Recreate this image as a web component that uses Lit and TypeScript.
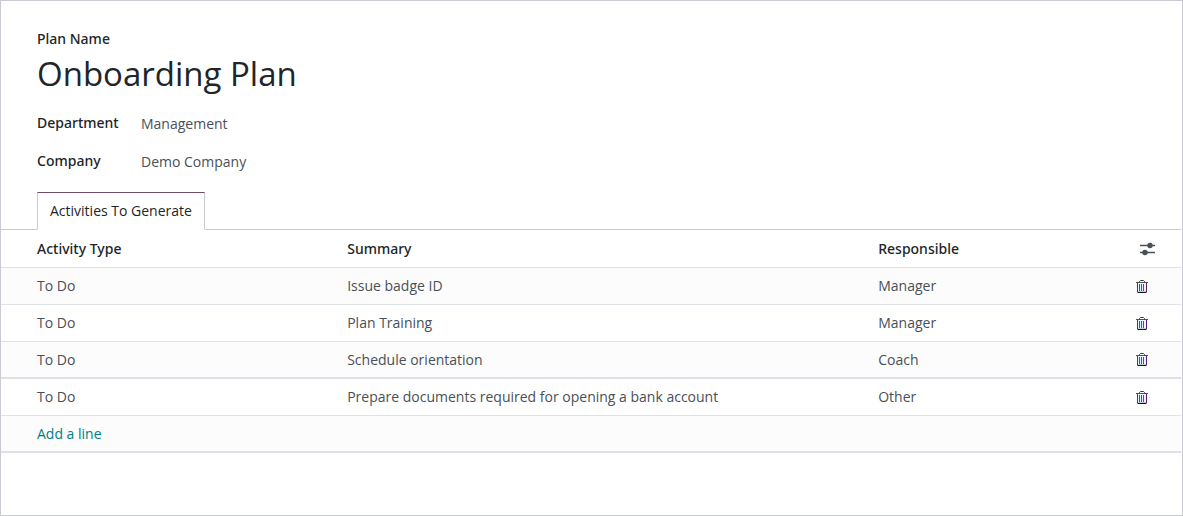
import { LitElement, html, css, svg } from "lit";
import { customElement, property, state } from "lit/decorators.js";

interface Activity {
  type: string;
  summary: string;
  responsible: string;
}

const slidersIcon = svg`<svg width="16" height="14" viewBox="0 0 16 14" aria-hidden="true">
  <path d="M0 3.5h15M0 10.5h15" stroke="#495057" stroke-width="1.3"/>
  <circle cx="10" cy="3.5" r="2.7" fill="#495057"/>
  <circle cx="5" cy="10.5" r="2.7" fill="#495057"/>
</svg>`;

const trashIcon = svg`<svg width="12" height="13" viewBox="0 0 12 13" aria-hidden="true">
  <path d="M1 3h10v9H1z" fill="#e6f5ff"/>
  <path d="M0 2.5h12" stroke="#55534f" stroke-width="1"/>
  <path d="M3.5 2.5V1.5L4.5 0.5h3l1 1v1" fill="none" stroke="#343a40" stroke-width="1"/>
  <path d="M1.5 3v9" stroke="#4c4535" stroke-width="1"/>
  <path d="M10.5 3v9" stroke="#5a1a78" stroke-width="1"/>
  <path d="M1.5 12.4h9" stroke="#15151c" stroke-width="1.2"/>
  <path d="M3.5 4v7M5.5 4v7M7.5 4v7" stroke="#1767a8" stroke-width="1"/>
</svg>`;

@customElement("plan-field")
export class PlanField extends LitElement {
  @property() label = "";
  @property() value = "";
  @property({ type: Boolean, reflect: true }) large = false;

  static styles = css`
    :host {
      display: grid;
      grid-template-columns: 104px 1fr;
      align-items: center;
      height: 38px;
    }
    :host([large]) {
      display: block;
      height: auto;
    }
    .label {
      display: block;
      font-family: "Noto Sans", sans-serif;
      font-weight: 500;
      line-height: 20px;
      color: #212529;
    }
    .value {
      display: block;
      box-sizing: border-box;
      width: 100%;
      border: 0;
      padding: 2px 0 0;
      background: transparent;
      font: inherit;
      line-height: 20px;
      color: #495057;
      outline: none;
    }
    :host([large]) .value {
      font-size: 33px;
      line-height: 46px;
      height: 50px;
      padding: 0 0 2px;
      color: #212529;
    }
  `;

  render() {
    return html`
      <label class="label" for="field">${this.label}</label>
      <input class="value" id="field" type="text" .value=${this.value} />
    `;
  }
}

@customElement("activity-table")
export class ActivityTable extends LitElement {
  @state() private rows: Activity[] = [
    { type: "To Do", summary: "Issue badge ID", responsible: "Manager" },
    { type: "To Do", summary: "Plan Training", responsible: "Manager" },
    { type: "To Do", summary: "Schedule orientation", responsible: "Coach" },
    {
      type: "To Do",
      summary: "Prepare documents required for opening a bank account",
      responsible: "Other",
    },
  ];

  static styles = css`
    :host {
      display: block;
    }
    .table {
      width: 100%;
      table-layout: fixed;
      border-collapse: separate;
      border-spacing: 0;
    }
    .type {
      width: 29%;
    }
    .summary {
      width: 45%;
    }
    .actions {
      width: 49px;
    }
    th,
    td {
      box-sizing: border-box;
      height: 37px;
      padding: 0 4px;
      border-bottom: 1px solid #dee2e6;
      text-align: left;
      vertical-align: middle;
      line-height: 20px;
      color: #495057;
    }
    th {
      height: 38px;
      font-family: "Noto Sans", sans-serif;
      font-weight: 500;
      color: #212529;
    }
    th:first-child,
    td:first-child {
      padding-left: 36px;
    }
    tbody tr:nth-child(odd) {
      background: #fcfcfc;
    }
    .ruled td {
      border-bottom: 2px solid #dfe0e7;
    }
    .icon {
      display: flex;
      padding: 0;
      border: 0;
      background: none;
      cursor: pointer;
    }
    th .icon {
      padding-left: 4px;
    }
    .add {
      color: #017e84;
      text-decoration: none;
    }
  `;

  private remove(index: number) {
    this.rows = this.rows.filter((_, i) => i !== index);
  }

  render() {
    return html`
      <table class="table">
        <thead>
          <tr>
            <th class="type" scope="col">Activity Type</th>
            <th class="summary" scope="col">Summary</th>
            <th scope="col">Responsible</th>
            <th class="actions">
              <button class="icon" aria-label="Optional columns">${slidersIcon}</button>
            </th>
          </tr>
        </thead>
        <tbody>
          ${this.rows.map(
            (row, i) => html`
              <tr class=${i === 2 ? "ruled" : ""}>
                <td>${row.type}</td>
                <td>${row.summary}</td>
                <td>${row.responsible}</td>
                <td>
                  <button class="icon" aria-label="Delete row" @click=${() => this.remove(i)}>
                    ${trashIcon}
                  </button>
                </td>
              </tr>
            `
          )}
          <tr class="ruled">
            <td colspan="4"><a class="add" href="#">Add a line</a></td>
          </tr>
        </tbody>
      </table>
    `;
  }
}

@customElement("app-root")
export class AppRoot extends LitElement {
  static styles = css`
    :host {
      display: block;
      box-sizing: border-box;
      min-height: 100vh;
      padding-right: 1px;
      border: 1px solid #c9cad2;
      background: #fff;
      font-family: "Open Sans", "Noto Sans", sans-serif;
      font-size: 14px;
    }
    .fields {
      padding: 28px 36px 0;
    }
    .group {
      padding-top: 5px;
    }
    .tabs {
      display: flex;
      padding: 12px 36px 0;
      border-bottom: 1px solid #c9cad2;
    }
    .tab {
      height: 38px;
      margin-bottom: -1px;
      padding: 0 12px;
      border: 1px solid #c9cad2;
      border-top-color: #714b67;
      border-bottom-color: #fff;
      background: #fff;
      font: inherit;
      line-height: 20px;
      color: #212529;
    }
  `;

  render() {
    return html`
      <div class="fields">
        <plan-field large label="Plan Name" value="Onboarding Plan"></plan-field>
        <div class="group">
          <plan-field label="Department" value="Management"></plan-field>
          <plan-field label="Company" value="Demo Company"></plan-field>
        </div>
      </div>
      <div class="tabs" role="tablist">
        <button class="tab" role="tab" aria-selected="true">Activities To Generate</button>
      </div>
      <activity-table></activity-table>
    `;
  }
}
